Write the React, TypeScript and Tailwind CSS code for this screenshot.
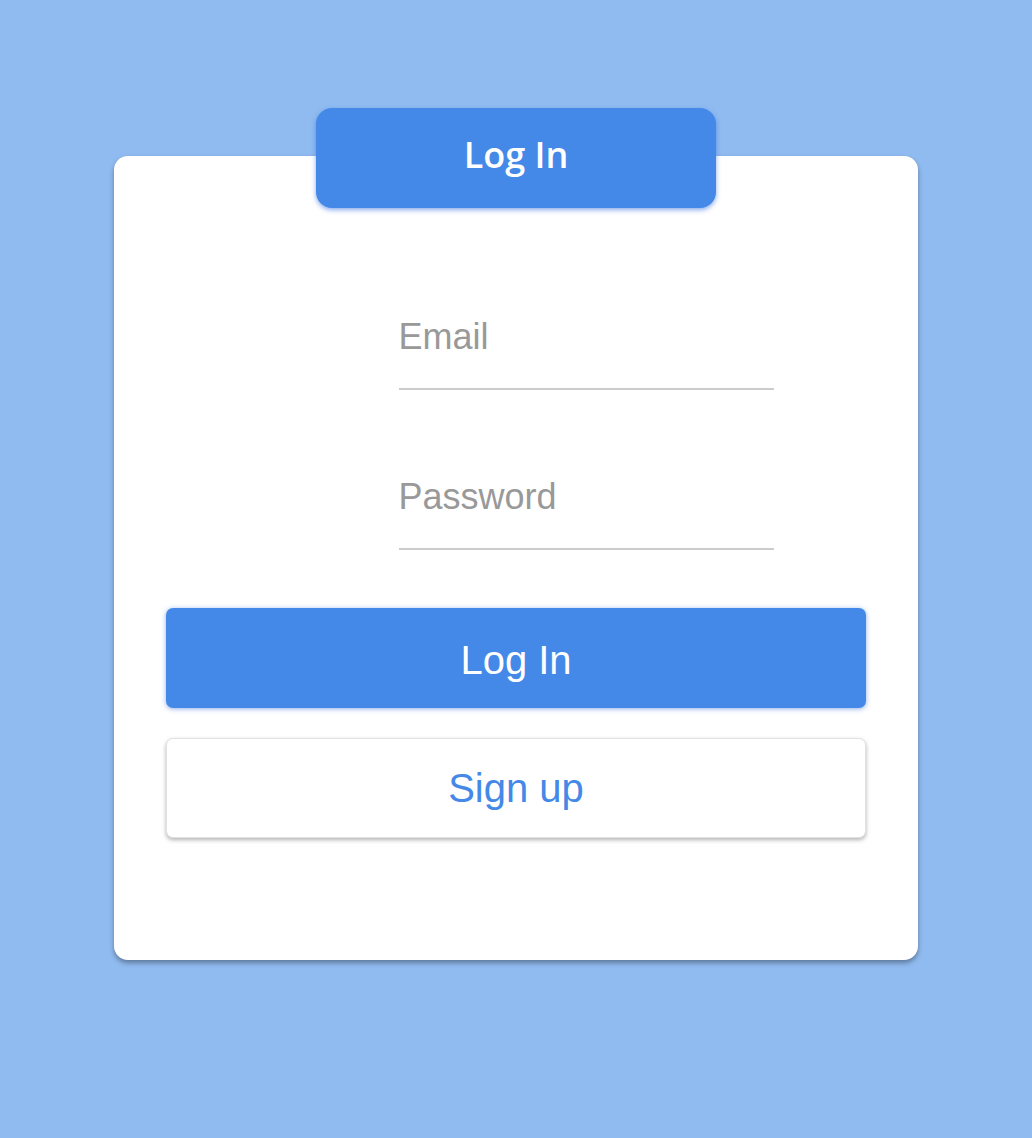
import React from 'react';

export default function App() {
  return (
    <div className="min-h-[1138px] w-full bg-[#90bbf0] flex justify-center pt-[156px] font-['Liberation_Sans',Arial,sans-serif]">
      <div className="relative w-[804px] h-[804px] bg-white rounded-[14px] shadow-[0_3px_5px_rgba(0,0,0,0.35)] flex flex-col items-center">
        {/* Tab header */}
        <div className="absolute top-[-48px] left-[202px] w-[400px] h-[100px] rounded-[16px] bg-[#4489e8] shadow-[0_2px_5px_rgba(40,100,220,0.55)] flex items-center justify-center pb-[6px]">
          <span className="text-white text-[36px] font-semibold font-['Open_Sans',sans-serif] leading-none">Log In</span>
        </div>

        <div className="flex flex-col gap-[86px] mt-[160px] ml-[140px]">
          <input
            type="email"
            placeholder="Email"
            className="w-[375px] h-[74px] pb-[30px] border-b-2 border-[#cccccc] text-[36px] text-[#333] placeholder:text-[#999999] outline-none bg-transparent"
          />
          <input
            type="password"
            placeholder="Password"
            className="w-[375px] h-[74px] pb-[30px] border-b-2 border-[#cccccc] text-[36px] text-[#333] placeholder:text-[#999999] outline-none bg-transparent"
          />
        </div>

        <button className="mt-[58px] w-[700px] h-[100px] pt-[4px] rounded-[7px] bg-[#4489e8] text-white text-[40px] shadow-[0_1px_5px_rgba(40,100,220,0.5)]">
          Log In
        </button>
        <button className="mt-[30px] w-[700px] h-[100px] rounded-[7px] bg-white text-[#4489e8] text-[40px] border border-[#e2e2e2] shadow-[0_2px_4px_rgba(0,0,0,0.3)]">
          Sign up
        </button>
      </div>
    </div>
  );
}
